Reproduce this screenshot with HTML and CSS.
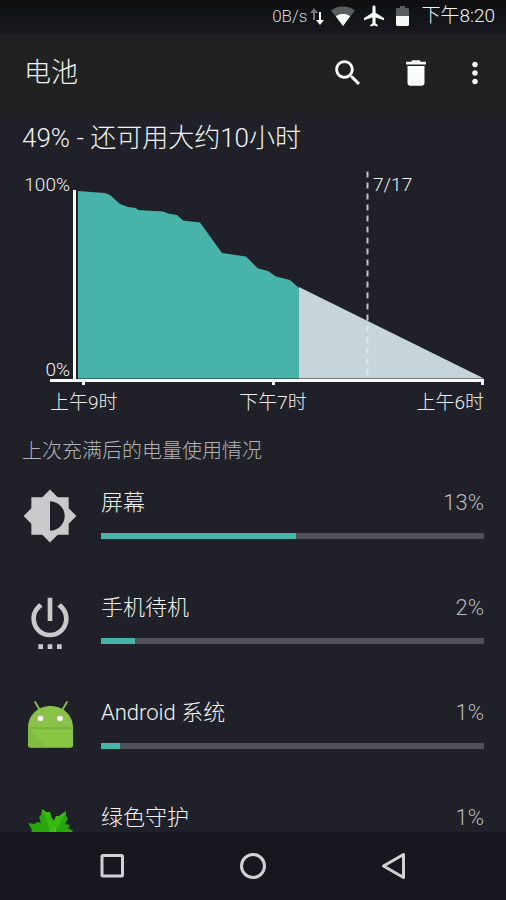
FILE: index.html
```html
<!DOCTYPE html>
<html lang="zh-CN">
<head>
<meta charset="utf-8">
<meta name="viewport" content="width=device-width, initial-scale=1">
<title>电池</title>
<link rel="stylesheet" href="styles.css">
</head>
<body>
<div class="status-bar">
  <span class="net-speed">0B/s</span>
  <svg class="status-arrows" viewBox="0 0 14 20" width="14" height="20" aria-hidden="true">
    <path fill="#73767a" d="M4 2 0 7h3v7h2V7h3z"/>
    <path fill="#f5f9f7" d="M10 19l4-5h-3V6H9v8H6z"/>
  </svg>
  <svg class="status-wifi" viewBox="0 0 24 20" width="24" height="20" aria-hidden="true">
    <path fill="#5b5c5e" d="M12 20 0 4.500C3.500 1.800 7.500.5 12 .5s8.500 1.300 12 4z"/>
    <path fill="#f5f9f7" d="M12 20 4.800 10.300C7 8.600 9.300 8 12 8s5 .6 7.200 2.300z"/>
  </svg>
  <svg class="status-plane" viewBox="2 1.500 19 21" width="20" height="22" aria-hidden="true">
    <path fill="#f5f9f7" d="M21 16v-2l-8-5V3.500c0-.83-.67-1.500-1.500-1.500S10 2.670 10 3.500V9l-8 5v2l8-2.500V19l-2 1.500V22l3.500-1 3.500 1v-1.500L13 19v-5.500l8 2.500z"/>
  </svg>
  <svg class="status-battery" viewBox="0 0 13 20" width="13" height="20" aria-hidden="true">
    <path fill="#5b5c5e" d="M4 0h5v2h3l1 1v7H0V3l1-1h3z"/>
    <path fill="#f5f9f7" d="M0 10h13v9l-1 1H1l-1-1z"/>
  </svg>
  <time class="clock">下午8:20</time>
</div>

<header class="app-bar">
  <h1 class="title">电池</h1>
  <button class="action" type="button" aria-label="搜索">
    <svg viewBox="0 0 24 24" width="34" height="34"><path d="M15.500 14h-.79l-.28-.27C15.410 12.590 16 11.110 16 9.500 16 5.910 13.090 3 9.500 3S3 5.910 3 9.500 5.910 16 9.500 16c1.610 0 3.090-.59 4.230-1.570l.27.28v.79l5 4.990L20.490 19l-4.990-5zm-6 0C7.010 14 5 11.990 5 9.500S7.010 5 9.500 5 14 7.010 14 9.500 11.990 14 9.500 14z"/></svg>
  </button>
  <button class="action" type="button" aria-label="删除">
    <svg viewBox="0 0 24 24" width="34" height="34"><path d="M6 19c0 1.100.9 2 2 2h8c1.100 0 2-.9 2-2V7H6v12zM19 4h-3.500l-1-1h-5l-1 1H5v2h14V4z"/></svg>
  </button>
  <button class="action action-more" type="button" aria-label="更多选项">
    <svg viewBox="0 0 24 24" width="34" height="34"><path d="M12 8c1.100 0 2-.9 2-2s-.9-2-2-2-2 .9-2 2 .9 2 2 2zm0 2c-1.100 0-2 .9-2 2s.9 2 2 2 2-.9 2-2-.9-2-2-2zm0 6c-1.100 0-2 .9-2 2s.9 2 2 2 2-.9 2-2-.9-2-2-2z"/></svg>
  </button>
</header>

<main class="content">
  <p class="summary">49% - 还可用大约10小时</p>

  <svg class="chart" viewBox="22 168 462 248" role="img" aria-label="电池电量">
    <path class="used" d="M78 191 105 193 110 195 120 204 128 207 136 208 138 210 163 211.500 168 213.500 177 215 183 220.500 200 222.500 222 253 246 256.500 258 268.500 268 271 276 276.500 290 280 299 288V378.500H78z"/>
    <path class="predicted" d="M299 287 484 378.500H299z"/>
    <path class="midnight" d="M367.500 171.500V379"/>
    <path class="axis" d="M73 190h3v189h408v6h-3v-3H275v3h-3v-3H85v3h-3v-3H50v-3h23z"/>
    <text class="tick" x="70" y="191" text-anchor="end">100%</text>
    <text class="tick" x="70" y="376" text-anchor="end">0%</text>
    <text class="tick" x="373" y="191">7/17</text>
    <text class="tick" x="50" y="409">上午9时</text>
    <text class="tick" x="273" y="409" text-anchor="middle">下午7时</text>
    <text class="tick" x="484" y="409" text-anchor="end">上午6时</text>
  </svg>

  <h2 class="section">上次充满后的电量使用情况</h2>

  <ul class="apps">
    <li class="app">
      <svg class="app-icon" viewBox="0 0 24 24" aria-hidden="true"><path fill="#c9cacb" d="M20 15.310L23.310 12 20 8.690V4h-4.690L12 .69 8.690 4H4v4.690L.69 12 4 15.310V20h4.690L12 23.310 15.310 20H20v-4.690zM12 18.300V5.700c3.400 0 6.300 2.800 6.300 6.300s-2.900 6.300-6.300 6.300z"/></svg>
      <div class="app-info">
        <label class="app-name" for="use-screen">屏幕</label>
        <span class="app-share">13%</span>
        <progress class="bar" id="use-screen" max="100" value="51"></progress>
      </div>
    </li>
    <li class="app">
      <svg class="app-icon" viewBox="0 0 24 24" aria-hidden="true"><path fill="#c9cacb" d="M7 24h2v-2H7v2zm4 0h2v-2h-2v2zm2-22h-2v10h2V2zm3.560 2.440l-1.450 1.450C16.840 6.940 18 8.830 18 11c0 3.310-2.690 6-6 6s-6-2.690-6-6c0-2.170 1.160-4.060 2.880-5.120L7.440 4.440C5.360 5.880 4 8.280 4 11c0 4.420 3.580 8 8 8s8-3.580 8-8c0-2.720-1.360-5.120-3.440-6.560zM15 24h2v-2h-2v2z"/></svg>
      <div class="app-info">
        <label class="app-name" for="use-idle">手机待机</label>
        <span class="app-share">2%</span>
        <progress class="bar" id="use-idle" max="100" value="9"></progress>
      </div>
    </li>
    <li class="app">
      <svg class="app-icon" viewBox="0 2 56 56" aria-hidden="true">
        <path d="M13 6l6 10M45 6l-6 10" stroke="#83b84a" stroke-width="2" stroke-linecap="round" fill="none"/>
        <path fill="#8bc34a" d="M6 32C6 19 16 10 28.500 10S51 19 51 32v17.500q0 2-2 2H8q-2 0-2-2z"/>
        <path fill="#7cb342" opacity=".55" d="M6 32 25 51.500H8q-2 0-2-2z"/>
        <path fill="#84cc3e" opacity=".5" d="M6 32h45v17.500q0 2-2 2H25z"/>
        <path d="M6 32h45M8 51.500h41" stroke="#6fa337" stroke-width="1"/>
        <circle cx="18.500" cy="22.500" r="2.800" fill="#fff"/><circle cx="38" cy="22.500" r="2.800" fill="#fff"/>
      </svg>
      <div class="app-info">
        <label class="app-name" for="use-android">Android 系统</label>
        <span class="app-share">1%</span>
        <progress class="bar" id="use-android" max="100" value="5"></progress>
      </div>
    </li>
    <li class="app">
      <svg class="app-icon" viewBox="0 0 56 56" aria-hidden="true">
        <path fill="#27a70b" d="M28 50 14 40 8 32 10 27 6 20 12 21 16 19 19 20 17 14 19 12 20 6 24 9 28 9 29 14 32 18 34 13 37 13 44 8 44 13 46 15 43 21 48 22 46 25 51 28 44 42z"/>
        <path fill="#38bb0e" d="M20 6 24 9 28 9 29 14 32 18 34 13 37 13 44 8 38 20 32 30 29 40 27 24z"/>
        <path fill="none" stroke="#75c92c" d="M29 46 28 28M29 40 34 25"/>
      </svg>
      <div class="app-info">
        <label class="app-name" for="use-greenify">绿色守护</label>
        <span class="app-share">1%</span>
        <progress class="bar" id="use-greenify" max="100" value="4"></progress>
      </div>
    </li>
  </ul>
</main>

<nav class="nav-bar">
  <button class="nav-key" type="button" aria-label="最近任务">
    <svg viewBox="0 0 28 28" width="28" height="28"><rect x="4" y="3.500" width="20.500" height="20.500" rx="1"/></svg>
  </button>
  <button class="nav-key" type="button" aria-label="主屏幕">
    <svg viewBox="0 0 28 28" width="28" height="28"><circle cx="14" cy="14" r="11.500"/></svg>
  </button>
  <button class="nav-key" type="button" aria-label="返回">
    <svg viewBox="0 0 28 28" width="28" height="28"><path d="M23.500 2.500v23L3.500 14z" stroke-linejoin="round"/></svg>
  </button>
</nav>
</body>
</html>
```
FILE: styles.css
```css
* {
  box-sizing: border-box;
}

body {
  margin: 0;
  height: 100vh;
  display: flex;
  flex-direction: column;
  background: #1f2028;
  color: #f1f3f3;
  font-family: Roboto, "Noto Sans CJK SC", sans-serif;
  font-weight: 300;
}

h1,
h2,
p,
ul {
  margin: 0;
  padding: 0;
  font-weight: 300;
}

button {
  padding: 0;
  border: 0;
  background: none;
}

.status-bar {
  flex: none;
  height: 34px;
  padding: 0 11px 2px;
  display: flex;
  align-items: center;
  justify-content: flex-end;
  background: linear-gradient(#100f11, #111418 50%, #16171b 75%, #191922);
}

.net-speed {
  font-size: 17px;
  color: #d3d6d7;
}

.status-arrows {
  margin: 0 7px 0 3px;
}

.status-wifi {
  margin-right: 9px;
}

.status-plane {
  margin-right: 12px;
}

.status-battery {
  margin-right: 12px;
}

.clock {
  font-size: 19px;
  line-height: 30px;
}

.app-bar {
  flex: none;
  height: 79px;
  padding: 0 6px 2px 24px;
  display: flex;
  align-items: center;
  background: #212121;
}

.title {
  flex: 1;
  font-size: 27px;
  line-height: 40px;
}

.action {
  width: 68px;
  height: 68px;
  display: grid;
  place-items: center;
  fill: #fafdfb;
}

.action-more {
  width: 50px;
}

.content {
  flex: 1;
  min-height: 0;
  overflow: hidden;
  padding: 6px 22px 0;
}

.summary {
  font-size: 26px;
  line-height: 38px;
}

.chart {
  display: block;
  width: 100%;
  margin-top: 11px;
}

.used {
  fill: #48b3a8;
}

.predicted {
  fill: #c7d4d9;
}

.midnight {
  fill: none;
  stroke: #e6ecef;
  stroke-opacity: 0.8;
  stroke-width: 2;
  stroke-dasharray: 6 5;
}

.axis {
  fill: #f9fbfb;
}

.tick {
  fill: #eef0f0;
  font-size: 19px;
}

.section {
  margin-top: 20px;
  color: #b2b4b7;
  font-size: 20px;
  line-height: 30px;
}

.apps {
  list-style: none;
}

.app {
  height: 105px;
  padding-top: 22px;
  display: flex;
  gap: 23px;
}

.app-icon {
  flex: none;
  width: 56px;
  height: 56px;
}

.app-info {
  flex: 1;
  display: grid;
  grid-template-columns: 1fr auto;
  align-content: start;
  row-gap: 15px;
}

.app-name,
.app-share {
  font-size: 22px;
  line-height: 30px;
}

.app-share {
  color: #b9bbbe;
}

.bar {
  grid-column: 1 / -1;
  appearance: none;
  display: block;
  width: 100%;
  height: 6px;
  border: 0;
  background: #505258;
}

.bar::-webkit-progress-bar {
  background: #505258;
}

.bar::-webkit-progress-value {
  background: #48b3a8;
}

.nav-bar {
  flex: none;
  height: 68px;
  display: flex;
  justify-content: center;
  background: #17181f;
}

.nav-key {
  width: 141px;
  display: grid;
  place-items: center;
  fill: none;
  stroke: #d0d2d2;
  stroke-width: 3;
}
```
